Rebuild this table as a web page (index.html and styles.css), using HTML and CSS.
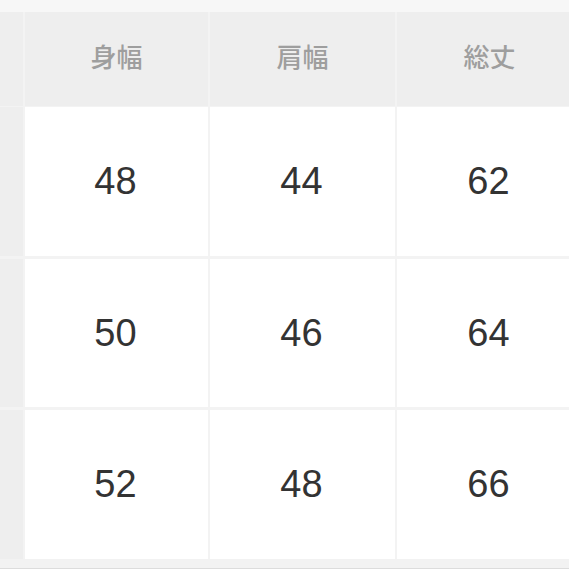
FILE: index.html
```html
<!DOCTYPE html>
<html lang="ja">
<head>
<meta charset="utf-8">
<link rel="stylesheet" href="styles.css">
</head>
<body>
<div class="frame">
  <div class="top-strip"></div>
  <div class="table">
    <div class="cell side"></div>
    <div class="cell head">身幅</div>
    <div class="cell head">肩幅</div>
    <div class="cell head">総丈</div>

    <div class="cell side"></div>
    <div class="cell val">48</div>
    <div class="cell val">44</div>
    <div class="cell val">62</div>

    <div class="cell side"></div>
    <div class="cell val">50</div>
    <div class="cell val">46</div>
    <div class="cell val">64</div>

    <div class="cell side"></div>
    <div class="cell val">52</div>
    <div class="cell val">48</div>
    <div class="cell val">66</div>
  </div>
  <div class="bottom-strip"></div>
</div>
</body>
</html>
```
FILE: styles.css
```css
html, body {
  margin: 0;
  padding: 0;
  background: #f2f2f2;
  overflow: hidden;
}
.frame {
  width: 569px;
  height: 569px;
  overflow: hidden;
  display: flex;
  flex-direction: column;
}
.top-strip {
  height: 12px;
  flex: none;
  background: #f7f7f7;
}
.table {
  flex: none;
  display: grid;
  width: 800px;
  grid-template-columns: 23px 183px 185px 185px;
  grid-template-rows: 92px 149px 148px 149px;
  column-gap: 2px;
  row-gap: 3px;
  background: #f3f3f3;
}
.cell {
  display: flex;
  align-items: center;
  justify-content: center;
}
.side {
  background: #eeeeee;
}
.head {
  background: #eeeeee;
  color: #9e9e9e;
  font-family: "Noto Sans CJK JP", "Noto Sans", sans-serif;
  font-weight: 500;
  font-size: 26px;
  padding-bottom: 8px;
  box-sizing: border-box;
}
.val {
  background: #ffffff;
  color: #333333;
  font-family: "Liberation Sans", Arial, sans-serif;
  font-size: 38px;
  padding-right: 2px;
}
.table .cell:nth-child(-n+4) {
  margin-bottom: -2px;
}
.bottom-strip {
  flex: none;
  height: 9px;
  background: #f2f2f2;
  border-bottom: 3px solid #dcdcdc;
}
```
